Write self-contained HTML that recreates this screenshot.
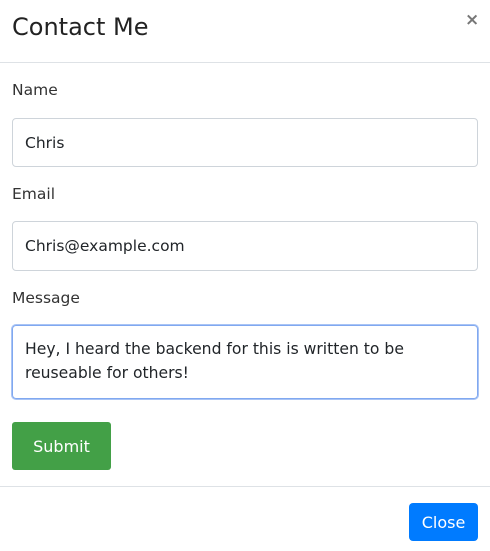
<!DOCTYPE html><html><head><style>
body{margin:0;width:490px;height:551px;background:#fff;font-family:"DejaVu Sans","Liberation Sans",sans-serif;color:#212529;position:relative;overflow:hidden}
.a{position:absolute}
.in{position:absolute;left:12px;width:466px;border:1px solid #ced4da;border-radius:4px;box-sizing:border-box;font-size:15.5px;padding-left:12px;display:flex;align-items:center}
.lab{position:absolute;left:12px;font-size:15.5px;color:#333}
</style></head><body>
<div class="a" style="left:12px;top:13px;font-size:24px;color:#222">Contact Me</div>
<div class="a" style="left:465px;top:10px;font-size:17px;font-weight:bold;color:#777">×</div>
<div class="a" style="left:0;top:62px;width:490px;height:1px;background:#dee2e6"></div>
<div class="lab" style="top:81px">Name</div>
<div class="in" style="top:118px;height:49px">Chris</div>
<div class="lab" style="top:185px">Email</div>
<div class="in" style="top:221px;height:50px">Chris@example.com</div>
<div class="lab" style="top:289px">Message</div>
<div class="in" style="top:325px;height:74px;border:1px solid #80a8f0;box-shadow:0 0 0 1px #a9c4f5;align-items:flex-start;padding-top:11px;line-height:24px;font-size:15.6px">Hey, I heard the backend for this is written to be<br>reuseable for others!</div>
<div class="a" style="left:12px;top:422px;width:99px;height:48px;background:#43a047;border-radius:3px;color:#fff;font-size:16px;display:flex;align-items:center;justify-content:center">Submit</div>
<div class="a" style="left:0;top:486px;width:490px;height:1px;background:#dee2e6"></div>
<div class="a" style="left:409px;top:503px;width:69px;height:38px;background:#007bff;border-radius:4px;color:#fff;font-size:16px;display:flex;align-items:center;justify-content:center">Close</div>
</body></html>
